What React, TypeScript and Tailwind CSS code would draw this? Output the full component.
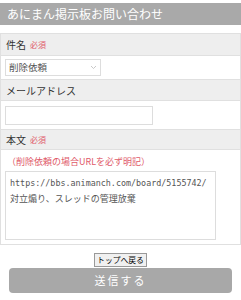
export default function App() {
  return (
    <div className="w-[241px] h-[300px] bg-white pt-[3px] text-[#333]" style={{ fontFamily: '"Noto Sans CJK JP", "Noto Sans", sans-serif' }}>
      {/* Header */}
      <div className="h-[22px] bg-[#a9a9a9] px-[7px] flex items-center text-white text-[12px]">
        あにまん掲示板お問い合わせ
      </div>

      <div className="mt-[8px] border border-[#e0e0e0] text-[10px]">
        {/* 件名 */}
        <div className="h-[22px] bg-[#eeeeee] px-[5px] flex items-center gap-[4px] border-b border-[#e0e0e0]">
          <span>件名</span>
          <span className="text-[#e05a6a] text-[8px]">必須</span>
        </div>
        <div className="h-[24px] px-[4px] flex items-center border-b border-[#e0e0e0]">
          <div className="w-[96px] h-[17px] border border-[#dddddd] flex items-center justify-between px-[3px] text-[9.5px] text-[#555]">
            <span>削除依頼</span>
            <svg width="7" height="5" viewBox="0 0 7 5" fill="none" stroke="#bbb" strokeWidth="0.8">
              <path d="M1 1l2.5 2.5L6 1" />
            </svg>
          </div>
        </div>

        {/* メールアドレス */}
        <div className="h-[21px] bg-[#eeeeee] px-[5px] flex items-center border-b border-[#e0e0e0]">
          メールアドレス
        </div>
        <div className="h-[29px] px-[4px] flex items-center border-b border-[#e0e0e0]">
          <div className="w-[148px] h-[19px] border border-[#dddddd]" />
        </div>

        {/* 本文 */}
        <div className="h-[20px] bg-[#eeeeee] px-[5px] flex items-center gap-[4px] border-b border-[#e0e0e0]">
          <span>本文</span>
          <span className="text-[#e05a6a] text-[8px]">必須</span>
        </div>
        <div className="px-[4px] pt-[4px] pb-[4px]">
          <div className="text-[#e05a6a] text-[9px] h-[15px] flex items-center px-[2px]">（削除依頼の場合URLを必ず明記）</div>
          <div className="mt-[2px] w-[211px] h-[69px] border border-[#dddddd] px-[4px] pt-[3px] text-[9px] leading-[16px] text-[#555]">
            <div style={{ fontFamily: '"DejaVu Sans Mono", monospace' }} className="text-[8.4px]">https://bbs.animanch.com/board/5155742/</div>
            <div>対立煽り、スレッドの管理放棄</div>
          </div>
        </div>
      </div>

      {/* Buttons */}
      <div className="flex flex-col items-center mt-[8px]">
        <button className="h-[14px] px-[2px] border border-[#999] bg-[#f0f0f0] text-[7.8px] text-black leading-none">トップへ戻る</button>
        <button className="mt-[1px] w-[223px] h-[25px] rounded-[4px] bg-[#a8a8a8] text-white text-[11px] tracking-[2px]">送信する</button>
      </div>
    </div>
  );
}
